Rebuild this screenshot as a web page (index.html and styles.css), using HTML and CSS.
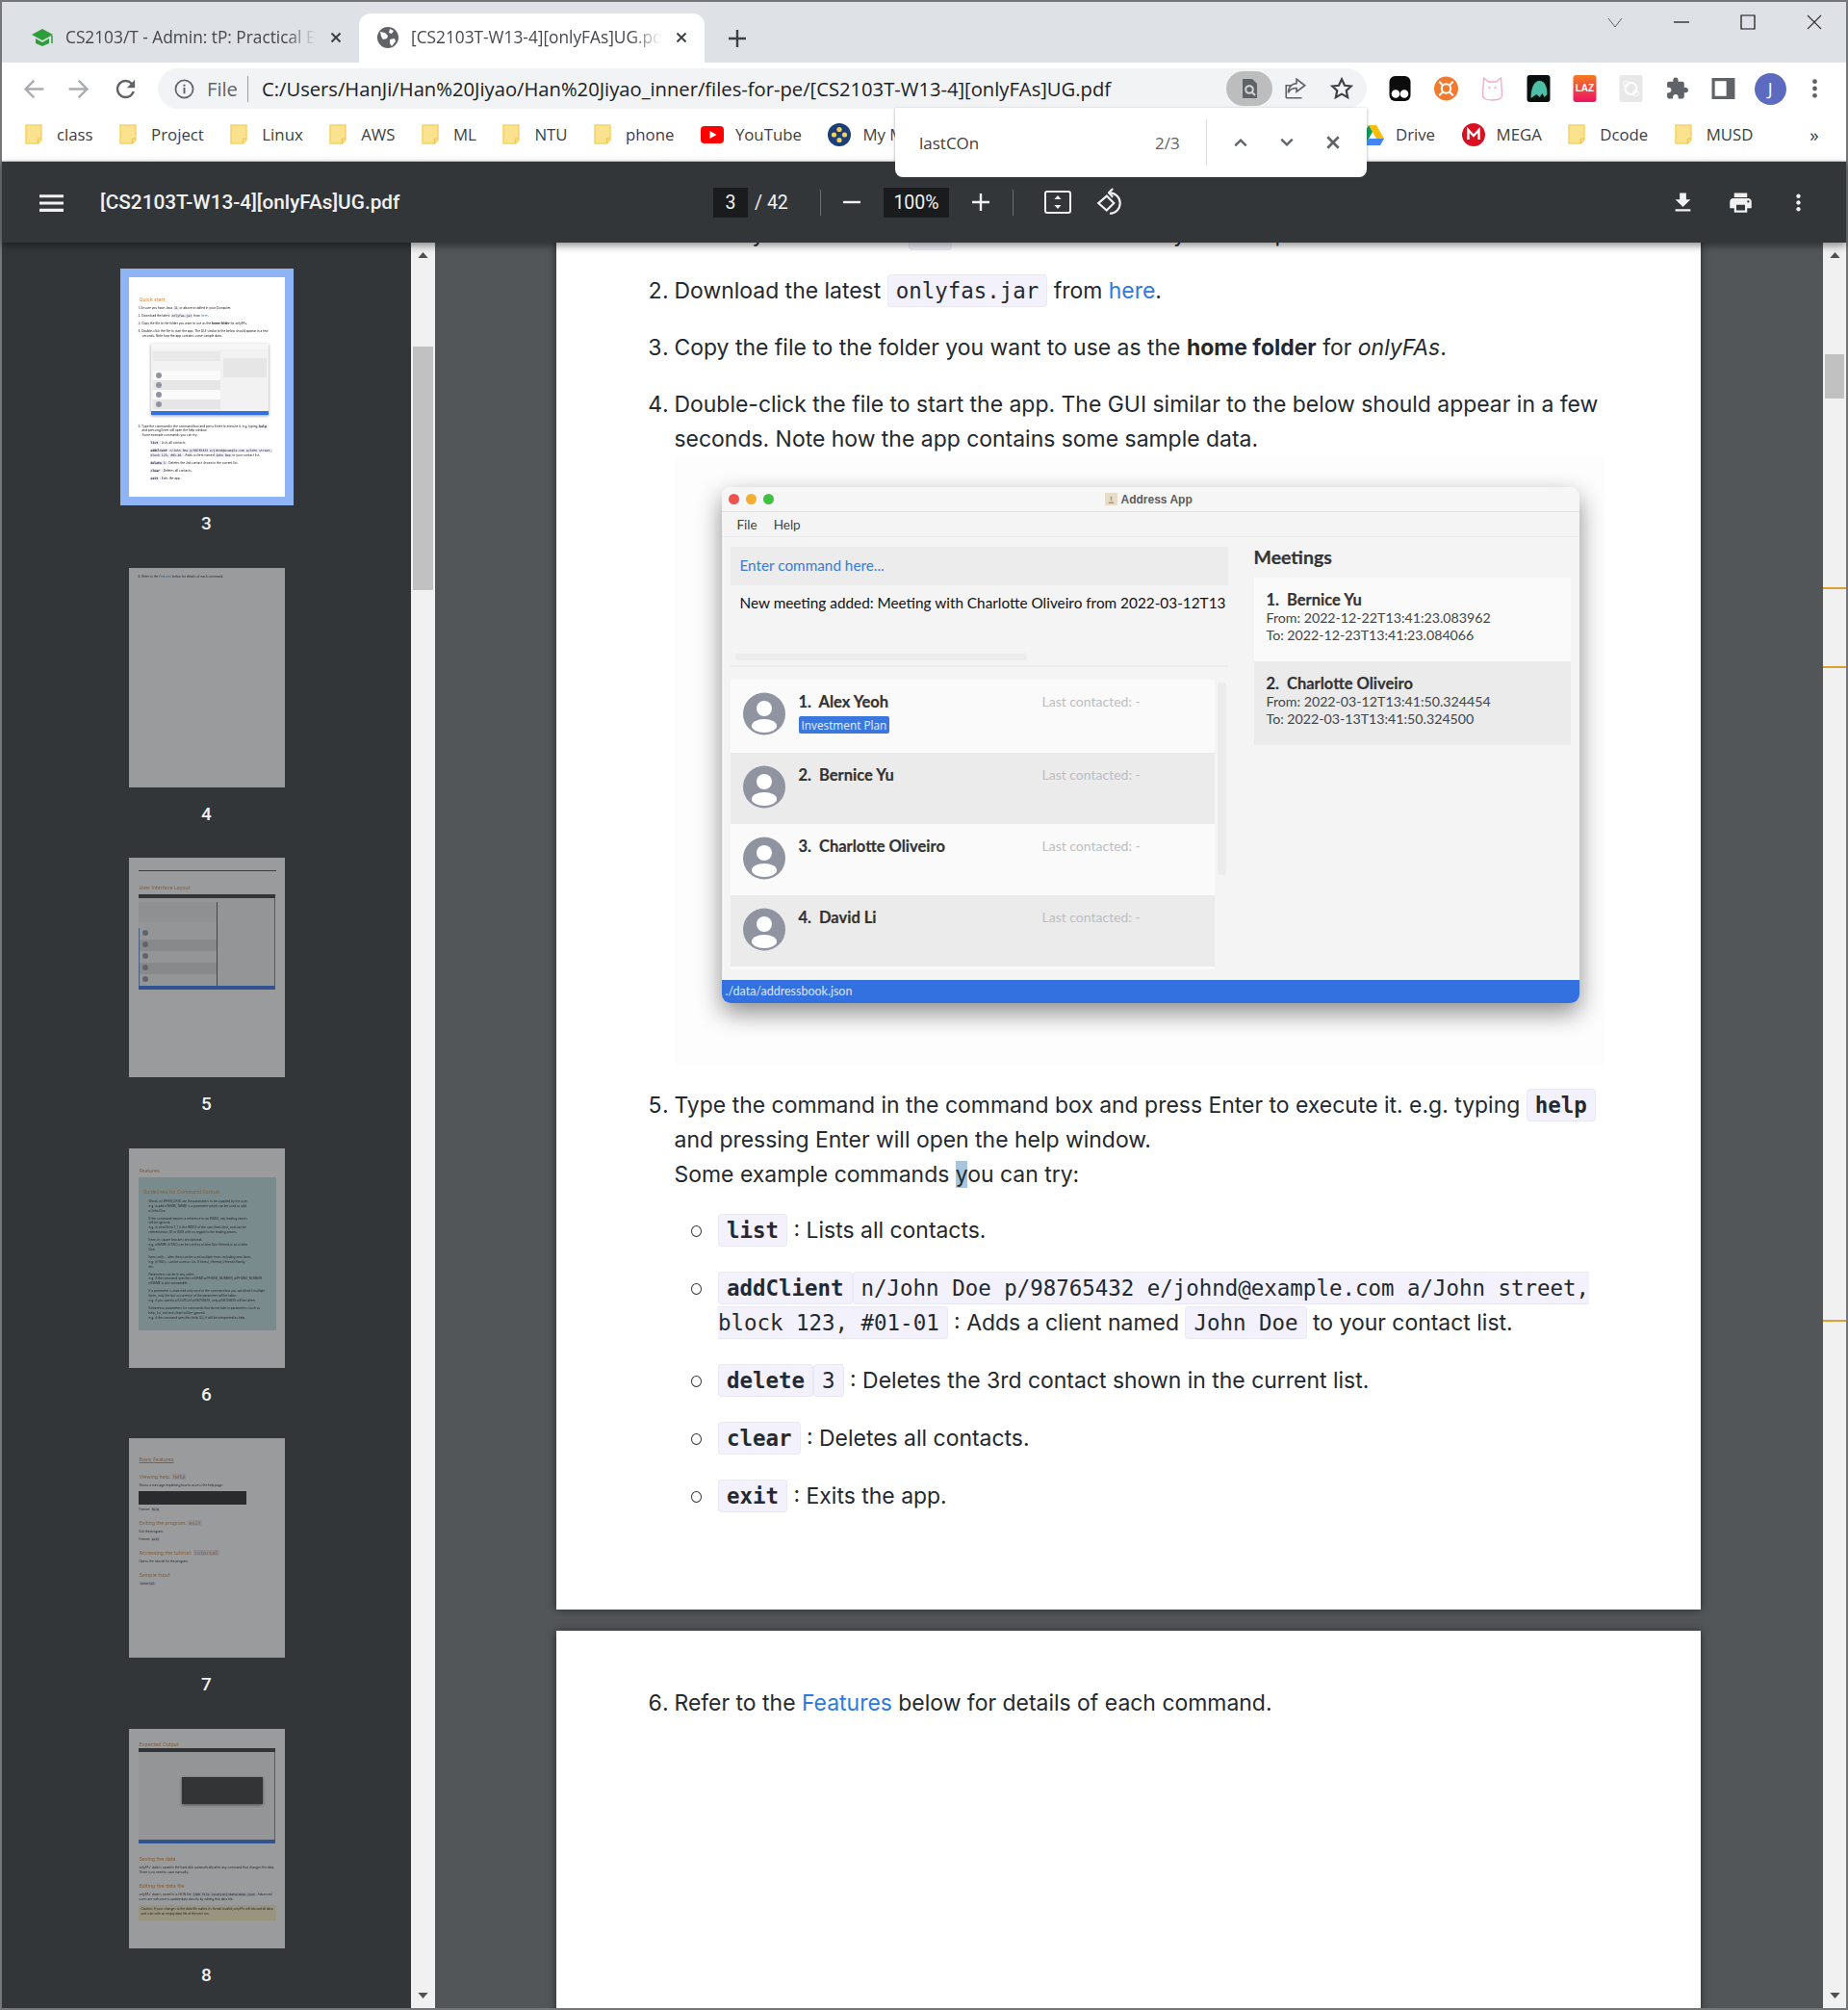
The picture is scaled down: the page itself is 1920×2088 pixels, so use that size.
FILE: index.html
```html
<!DOCTYPE html>
<html lang="en">
<head>
    <meta charset="UTF-8">
    <title>[CS2103T-W13-4][onlyFAs]UG.pdf</title>
    <link rel="stylesheet" href="styles.css">
</head>
<body>
<svg class="defs" width="0" height="0">
    <symbol id="folder" viewBox="0 0 18 21"><path d="M1 1h16v15.500l-3.500 3.500H1z" fill="#fbe28f" stroke="#f6d466" stroke-width="1.500"/><path d="M17 15h-3.500v5" fill="none" stroke="#f0c64f" stroke-width="1.200"/></symbol>
    <symbol id="avatar" viewBox="0 0 44 45"><circle cx="22" cy="22.500" r="22" fill="#8f94a0"/><circle cx="22" cy="17" r="8" fill="#fff"/><ellipse cx="22" cy="35" rx="13" ry="7" fill="#fff"/></symbol>
</svg>

<div class="browser">
    <!-- tabs -->
    <div class="tabs">
        <div class="tab">
            <svg class="favicon" viewBox="0 0 24 24"><path d="M12 3 1 9l11 6 11-6z" fill="#2e9e3a"/><path d="M5 13v5l7 3 7-3v-5l-7 4z" fill="#2e9e3a"/><path d="M22 10v8" stroke="#2e9e3a" stroke-width="1.500"/></svg>
            <span class="tab-title">CS2103/T - Admin: tP: Practical Exam</span>
            <svg class="tab-x" viewBox="0 0 12 12"><path d="M1.500 1.500l9 9m0-9l-9 9" stroke="#3c4043" stroke-width="2"/></svg>
        </div>
        <div class="tab tab-active">
            <svg class="favicon" viewBox="0 0 24 24"><circle cx="12" cy="12" r="11" fill="#5f6368"/><path d="M4 6l5 1 3 3-1 3-4 1-2-3zM14 3l4 2-2 3-3-1zM14 14l5-1 1 3-4 5-2-3z" fill="#fff"/></svg>
            <span class="tab-title">[CS2103T-W13-4][onlyFAs]UG.pdf</span>
            <svg class="tab-x" viewBox="0 0 12 12"><path d="M1.500 1.500l9 9m0-9l-9 9" stroke="#3c4043" stroke-width="2"/></svg>
        </div>
        <svg class="tab-plus" viewBox="0 0 20 20"><path d="M10 1v18M1 10h18" stroke="#3c4043" stroke-width="2.400"/></svg>
        <div class="win-btns">
            <svg viewBox="0 0 16 16" class="win-ic"><path d="M1 4l7 9 7-9" fill="none" stroke="#5f6368"/></svg>
            <svg viewBox="0 0 16 16" class="win-ic"><path d="M0 8h16" stroke="#111" stroke-width="1.200"/></svg>
            <svg viewBox="0 0 16 16" class="win-ic"><path d="M1 1h14v14H1z" fill="none" stroke="#111" stroke-width="1.200"/></svg>
            <svg viewBox="0 0 16 16" class="win-ic"><path d="M1 1l14 14M15 1L1 15" stroke="#333" stroke-width="1.100"/></svg>
        </div>
    </div>

    <!-- address bar -->
    <div class="toolbar">
        <div class="nav-btn"><svg viewBox="0 0 24 24" fill="#a9adb2"><path d="M21 11H7.800l5.600-5.600L12 4l-8 8 8 8 1.400-1.400L7.800 13H21z"/></svg></div>
        <div class="nav-btn"><svg viewBox="0 0 24 24" fill="#a9adb2"><path d="M3 11h13.200l-5.600-5.600L12 4l8 8-8 8-1.400-1.400 5.600-5.600H3z"/></svg></div>
        <div class="nav-btn"><svg viewBox="0 0 24 24" fill="#5f6368"><path d="M17.650 6.350A7.958 7.958 0 0 0 12 4c-4.420 0-7.990 3.580-7.990 8s3.570 8 7.990 8c3.730 0 6.840-2.550 7.730-6h-2.080A5.990 5.990 0 0 1 12 18c-3.310 0-6-2.690-6-6s2.690-6 6-6c1.660 0 3.140.690 4.220 1.780L13 11h7V4l-2.350 2.350z"/></svg></div>
        <div class="omnibox">
            <svg class="info" viewBox="0 0 22 22"><circle cx="11" cy="11" r="9.500" fill="none" stroke="#5f6368" stroke-width="1.800"/><path d="M11 9.500V16M11 6v2" stroke="#5f6368" stroke-width="2"/></svg>
            <span class="scheme">File</span>
            <span class="url">C:/Users/HanJi/Han%20Jiyao/Han%20Jiyao_inner/files-for-pe/[CS2103T-W13-4][onlyFAs]UG.pdf</span>
            <div class="lens"><svg viewBox="0 0 24 24"><path d="M5 2h10l5 5v15H5z" fill="#5f6368"/><circle cx="12" cy="13" r="3.800" fill="none" stroke="#d5d6d7" stroke-width="2"/><path d="M15 16l3 3" stroke="#d5d6d7" stroke-width="2"/></svg></div>
            <div class="omni-ic"><svg viewBox="0 0 24 24" fill="none" stroke="#5f6368" stroke-width="1.500"><path d="M3 21h15M3 21V9h6M13 3l8 6-8 6v-3.500c-4 0-6.500 1-8 4.500 0-5 3-8.500 8-9z"/></svg></div>
            <div class="omni-ic"><svg viewBox="0 0 24 24" fill="none" stroke="#3c4043" stroke-width="2"><path d="M12 3l2.800 6 6.200.700-4.600 4.300 1.300 6.500L12 17.200 6.300 20.500 7.600 14 3 9.700 9.200 9z"/></svg></div>
        </div>
        <div class="exts">
            <div class="ext"><svg viewBox="0 0 24 28"><rect x="1" y="1" width="22" height="26" rx="6" fill="#0c0c0c"/><circle cx="7.500" cy="19.500" r="4.300" fill="#fff"/><circle cx="16.500" cy="19.500" r="4.300" fill="#fff"/></svg></div>
            <div class="ext"><svg viewBox="0 0 24 24"><circle cx="12" cy="12" r="12" fill="#ee7b30"/><circle cx="12" cy="12" r="4.500" fill="none" stroke="#fff" stroke-width="2"/><path d="M5 5l4 4m6 6l4 4M19 5l-4 4m-6 6l-4 4" stroke="#fff" stroke-width="2"/></svg></div>
            <div class="ext"><svg viewBox="0 0 24 28" fill="none" stroke="#f5a9c0" stroke-width="1.300"><path d="M3 3l5 4h8l5-4 1 18c0 4-5 5-10 5s-10-1-10-5z"/><path d="M8 12l2 2m6-2l-2 2" /></svg></div>
            <div class="ext"><svg viewBox="0 0 24 28"><rect width="24" height="28" rx="3" fill="#08100e"/><path d="M4 24c0-10 3-18 9-18s8 7 8 14l-3 3-2-4-3 4-3-3z" fill="#4cbfa6"/></svg></div>
            <div class="ext"><svg viewBox="0 0 24 28"><defs><linearGradient id="laz" x1="0" y1="0" x2="0" y2="1"><stop offset="0" stop-color="#f57c1f"/><stop offset="1" stop-color="#ee1265"/></linearGradient></defs><rect width="24" height="28" rx="3" fill="url(#laz)"/><text x="12" y="17" class="laz-text">LAZ</text></svg></div>
            <div class="ext"><svg viewBox="0 0 24 28"><rect width="24" height="28" rx="2" fill="#e8e8e8"/><circle cx="12" cy="14" r="6" fill="none" stroke="#fff" stroke-width="2"/><circle cx="7" cy="9" r="3" fill="none" stroke="#fff"/><circle cx="17" cy="19" r="3" fill="none" stroke="#fff"/></svg></div>
            <div class="ext"><svg viewBox="0 0 24 24" fill="#5f6368"><path d="M20.500 11H19V7c0-1.100-.9-2-2-2h-4V3.500a2.500 2.500 0 0 0-5 0V5H4c-1.100 0-1.990.9-1.990 2v3.800H3.500c1.490 0 2.700 1.210 2.700 2.700s-1.210 2.700-2.700 2.700H2V20c0 1.100.9 2 2 2h3.800v-1.500c0-1.490 1.210-2.700 2.700-2.700 1.490 0 2.700 1.210 2.700 2.700V22H17c1.100 0 2-.9 2-2v-4h1.500a2.500 2.500 0 0 0 0-5z"/></svg></div>
            <div class="ext"><svg viewBox="0 0 24 24"><path d="M2 3h20v18H2z" fill="none" stroke="#5f6368" stroke-width="3"/><path d="M15 3h7v18h-7z" fill="#5f6368"/></svg></div>
            <div class="avatar-btn">J</div>
            <div class="ext"><svg viewBox="0 0 24 24" fill="#5f6368"><circle cx="12" cy="5" r="2.300"/><circle cx="12" cy="12" r="2.300"/><circle cx="12" cy="19" r="2.300"/></svg></div>
        </div>
    </div>

    <!-- bookmarks -->
    <div class="bookmarks">
        <div class="bm-group">
            <div class="bm"><svg class="bm-ic"><use href="#folder"/></svg>class</div>
            <div class="bm"><svg class="bm-ic"><use href="#folder"/></svg>Project</div>
            <div class="bm"><svg class="bm-ic"><use href="#folder"/></svg>Linux</div>
            <div class="bm"><svg class="bm-ic"><use href="#folder"/></svg>AWS</div>
            <div class="bm"><svg class="bm-ic"><use href="#folder"/></svg>ML</div>
            <div class="bm"><svg class="bm-ic"><use href="#folder"/></svg>NTU</div>
            <div class="bm"><svg class="bm-ic"><use href="#folder"/></svg>phone</div>
            <div class="bm"><svg class="bm-ic-wide" viewBox="0 0 24 18"><rect width="24" height="18" rx="4" fill="#f00"/><path d="M9.500 5v8l7-4z" fill="#fff"/></svg>YouTube</div>
            <div class="bm"><svg class="bm-ic-wide" viewBox="0 0 24 24"><circle cx="12" cy="12" r="12" fill="#1d3f78"/><circle cx="12" cy="6.500" r="2.600" fill="#f3cf5b"/><circle cx="6.500" cy="12" r="2.600" fill="#f3cf5b"/><circle cx="17.500" cy="12" r="2.600" fill="#f3cf5b"/><circle cx="12" cy="17.500" r="2.600" fill="#f3cf5b"/></svg>My M</div>
        </div>
        <div class="bm-group">
            <div class="bm"><svg class="bm-ic-wide" viewBox="0 0 24 22"><path d="M8 1h8l8 14h-8z" fill="#fbbc04"/><path d="M8 1L0 15l4 7 8-14z" fill="#0f9d58"/><path d="M4 22h16l4-7H8z" fill="#4285f4"/></svg>Drive</div>
            <div class="bm"><svg class="bm-ic-wide" viewBox="0 0 24 24"><circle cx="12" cy="12" r="12" fill="#d9101f"/><path d="M6.500 17V7l5.500 6 5.500-6v10" fill="none" stroke="#fff" stroke-width="2.400"/></svg>MEGA</div>
            <div class="bm"><svg class="bm-ic"><use href="#folder"/></svg>Dcode</div>
            <div class="bm"><svg class="bm-ic"><use href="#folder"/></svg>MUSD</div>
            <div class="bm-more">»</div>
        </div>
    </div>

    <!-- pdf viewer toolbar -->
    <div class="pdfbar">
        <svg class="pdf-ic menu-ic" viewBox="0 0 24 24"><path d="M0 4h24v3H0zM0 11h24v3H0zM0 18h24v3H0z" fill="#f1f1f1"/></svg>
        <div class="pdf-title">[CS2103T-W13-4][onlyFAs]UG.pdf</div>
        <div class="pdf-center">
            <span class="num-box page-box">3</span>
            <span class="page-total">/ 42</span>
            <span class="pdf-sep"></span>
            <svg class="pdf-ic zoom-ic" viewBox="0 0 18 18"><path d="M0 9h18" stroke="#f1f1f1" stroke-width="2.400"/></svg>
            <span class="num-box zoom-box">100%</span>
            <svg class="pdf-ic zoom-ic" viewBox="0 0 18 18"><path d="M0 9h18M9 0v18" stroke="#f1f1f1" stroke-width="2.400"/></svg>
            <span class="pdf-sep"></span>
            <svg class="pdf-ic fit-ic" viewBox="0 0 28 28" fill="none" stroke="#f1f1f1" stroke-width="2"><rect x="1" y="3" width="26" height="22" rx="2"/><path d="M14 7l-3.500 4h7zM14 21l-3.500-4h7z" fill="#f1f1f1" stroke="none"/></svg>
            <svg class="pdf-ic rot-ic" viewBox="0 0 28 28" fill="none" stroke="#f1f1f1" stroke-width="2"><path d="M11 8L3 15l8 7 7-7z"/><path d="M14 5a10 10 0 1 1 0 20"/><path d="M17 1l-4 4 4 4" stroke-linejoin="round"/></svg>
        </div>
        <div class="pdf-right">
            <svg class="pdf-ic" viewBox="0 0 24 24" fill="#f1f1f1"><path d="M19 9h-4V3H9v6H5l7 7 7-7zM5 18v2h14v-2H5z"/></svg>
            <svg class="pdf-ic" viewBox="0 0 24 24" fill="#f1f1f1"><path d="M19 8H5c-1.660 0-3 1.340-3 3v6h4v4h12v-4h4v-6c0-1.660-1.340-3-3-3zm-3 11H8v-5h8v5zm3-7c-.55 0-1-.45-1-1s.45-1 1-1 1 .45 1 1-.45 1-1 1zm-1-9H6v4h12V3z"/></svg>
            <svg class="pdf-ic" viewBox="0 0 24 24" fill="#f1f1f1"><path d="M12 8c1.100 0 2-.9 2-2s-.9-2-2-2-2 .9-2 2 .9 2 2 2zm0 2c-1.100 0-2 .9-2 2s.9 2 2 2 2-.9 2-2-.9-2-2-2zm0 6c-1.100 0-2 .9-2 2s.9 2 2 2 2-.9 2-2-.9-2-2-2z"/></svg>
        </div>
    </div>

    <!-- viewer -->
    <div class="viewer">
        <aside class="sidebar">
            <div class="thumb thumb-on">
                <div class="mini">
                    <p class="m-h m-h3">Quick start</p>
                    <p class="m-t m-i">1. Ensure you have Java <span class="m-c">11</span> or above installed in your Computer.</p>
                    <p class="m-t m-i">2. Download the latest <span class="m-c">onlyfas.jar</span> from <span class="m-link">here</span>.</p>
                    <p class="m-t m-i">3. Copy the file to the folder you want to use as the <b>home folder</b> for onlyFAs.</p>
                    <p class="m-t m-i m-close">4. Double-click the file to start the app. The GUI similar to the below should appear in a few</p>
                    <p class="m-t m-i m-in">seconds. Note how the app contains some sample data.</p>
                    <div class="m-win">
                        <div class="m-win-top"></div>
                        <div class="m-win-body">
                            <div class="m-win-left"><i class="m-cmd"></i><i class="m-row m-row-w"></i><i class="m-row"></i><i class="m-row m-row-w"></i><i class="m-row"></i></div>
                            <div class="m-win-right"><i class="m-card m-row-w"></i><i class="m-card"></i></div>
                        </div>
                        <div class="m-win-status"></div>
                    </div>
                    <p class="m-t m-i m-close">5. Type the command in the command box and press Enter to execute it. e.g. typing <span class="m-c"><b>help</b></span></p>
                    <p class="m-t m-i m-close m-in">and pressing Enter will open the help window.</p>
                    <p class="m-t m-i m-in">Some example commands you can try:</p>
                    <p class="m-t m-b"><span class="m-c"><b>list</b></span> : Lists all contacts.</p>
                    <p class="m-t m-b m-close"><span class="m-c"><b>addClient</b></span> <span class="m-c">n/John Doe p/98765432 e/johnd@example.com a/John street,</span></p>
                    <p class="m-t m-b"><span class="m-c">block 123, #01-01</span> : Adds a client named <span class="m-c">John Doe</span> to your contact list.</p>
                    <p class="m-t m-b"><span class="m-c"><b>delete</b> 3</span> : Deletes the 3rd contact shown in the current list.</p>
                    <p class="m-t m-b"><span class="m-c"><b>clear</b></span> : Deletes all contacts.</p>
                    <p class="m-t m-b"><span class="m-c"><b>exit</b></span> : Exits the app.</p>
                </div>
            </div>
            <div class="thumb-num">3</div>

            <div class="thumb">
                <div class="mini"><p class="m-t m-i m-first">6. Refer to the <span class="m-link">Features</span> below for details of each command.</p></div>
            </div>
            <div class="thumb-num">4</div>

            <div class="thumb">
                <div class="mini">
                    <hr class="m-hr">
                    <p class="m-h m-h5">User Interface Layout</p>
                    <div class="m-shot">
                        <div class="m-shot-top"></div>
                        <div class="m-shot-body">
                            <div class="m-shot-left"><i class="m-cmd m-cmd-5"></i><i class="m-row m-row-5"></i><i class="m-row m-row-5 m-row-g"></i><i class="m-row m-row-5"></i><i class="m-row m-row-5 m-row-g"></i><i class="m-row m-row-5"></i></div>
                        </div>
                        <div class="m-win-status"></div>
                    </div>
                </div>
            </div>
            <div class="thumb-num">5</div>

            <div class="thumb">
                <div class="mini">
                    <p class="m-h m-h6">Features</p>
                    <div class="m-note">
                        <p class="m-h m-note-h">Guidelines for Command Format:</p>
                        <p class="m-t m-n m-close">Words in UPPER_CASE are the parameters to be supplied by the user.</p>
                        <p class="m-t m-n m-close">e.g. in add n/NAME, NAME is a parameter which can be used as add</p>
                        <p class="m-t m-n">n/John Doe.</p>
                        <p class="m-t m-n m-close">If the command requires a reference to an INDEX, any leading zeroes</p>
                        <p class="m-t m-n m-close">will be ignored.</p>
                        <p class="m-t m-n m-close">e.g. in viewClient 1, 1 is the INDEX of the specified client, and can be</p>
                        <p class="m-t m-n">referenced as 01 or 0001 with no regard to the leading zeroes.</p>
                        <p class="m-t m-n m-close">Items in square brackets are optional.</p>
                        <p class="m-t m-n m-close">e.g. n/NAME [t/TAG] can be used as n/John Doe t/friend or as n/John</p>
                        <p class="m-t m-n">Doe.</p>
                        <p class="m-t m-n m-close">Items with ... after them can be used multiple times including zero times.</p>
                        <p class="m-t m-n m-close">e.g. [t/TAG]... can be used as (i.e. 0 times), t/friend, t/friend t/family</p>
                        <p class="m-t m-n">etc.</p>
                        <p class="m-t m-n m-close">Parameters can be in any order.</p>
                        <p class="m-t m-n m-close">e.g. if the command specifies n/NAME p/PHONE_NUMBER, p/PHONE_NUMBER</p>
                        <p class="m-t m-n">n/NAME is also acceptable.</p>
                        <p class="m-t m-n m-close">If a parameter is expected only once in the command but you specified it multiple</p>
                        <p class="m-t m-n m-close">times, only the last occurrence of the parameter will be taken.</p>
                        <p class="m-t m-n">e.g. if you specify p/12341234 p/56785678, only p/56785678 will be taken.</p>
                        <p class="m-t m-n m-close">Extraneous parameters for commands that do not take in parameters (such as</p>
                        <p class="m-t m-n m-close">help, list, exit and clear) will be ignored.</p>
                        <p class="m-t m-n">e.g. if the command specifies help 123, it will be interpreted as help.</p>
                    </div>
                </div>
            </div>
            <div class="thumb-num">6</div>

            <div class="thumb">
                <div class="mini">
                    <p class="m-h m-h7">Basic Features</p>
                    <p class="m-h m-sub">Viewing help: <span class="m-c">help</span></p>
                    <p class="m-t m-l">Shows a message explaining how to access the help page.</p>
                    <div class="m-dark"></div>
                    <p class="m-t m-l">Format: <span class="m-c">help</span></p>
                    <p class="m-h m-sub">Exiting the program: <span class="m-c">exit</span></p>
                    <p class="m-t m-l">Exit the program.</p>
                    <p class="m-t m-l">Format: <span class="m-c">exit</span></p>
                    <p class="m-h m-sub">Accessing the tutorial: <span class="m-c">tutorial</span></p>
                    <p class="m-t m-l">Opens the tutorial for the program.</p>
                    <p class="m-h m-sub">Sample Input</p>
                    <p class="m-t m-l"><span class="m-c">tutorial</span></p>
                </div>
            </div>
            <div class="thumb-num">7</div>

            <div class="thumb">
                <div class="mini">
                    <p class="m-h m-h8">Expected Output</p>
                    <div class="m-shot m-shot-8">
                        <div class="m-shot-top"></div>
                        <div class="m-shot-body m-shot-body-8"><div class="m-dialog"></div></div>
                        <div class="m-win-status"></div>
                    </div>
                    <p class="m-h m-sub">Saving the data</p>
                    <p class="m-t m-l m-close">onlyFAs' data is saved in the hard disk automatically after any command that changes the data.</p>
                    <p class="m-t m-l">There is no need to save manually.</p>
                    <p class="m-h m-sub">Editing the data file</p>
                    <p class="m-t m-l m-close">onlyFAs' data is saved in a JSON file <span class="m-c">[JAR file location]/data/data.json</span>. Advanced</p>
                    <p class="m-t m-l">users are welcome to update data directly by editing that data file.</p>
                    <div class="m-warn"><p class="m-t">Caution: If your changes to the data file makes its format invalid, onlyFAs will discard all data and start with an empty data file at the next run.</p></div>
                </div>
            </div>
            <div class="thumb-num">8</div>
        </aside>

        <div class="scrollbar scrollbar-side">
            <svg class="sb-arrow" viewBox="0 0 12 7"><path d="M6 0l6 7H0z"/></svg>
            <div class="sb-track"><div class="sb-thumb sb-thumb-side"></div></div>
            <svg class="sb-arrow" viewBox="0 0 12 7"><path d="M6 7l6-7H0z"/></svg>
        </div>

        <main class="main">
            <div class="pages">
                <section class="page page-one">
                    <ol class="steps">
                        <li>Ensure you have Java <code class="chip">11</code> or above installed in your Computer.</li>
                        <li>Download the latest <code class="chip">onlyfas.jar</code> from <a class="link">here</a>.</li>
                        <li>Copy the file to the folder you want to use as the <strong>home folder</strong> for <em>onlyFAs</em>.</li>
                        <li>Double-click the file to start the app. The GUI similar to the below should appear in a few seconds. Note how the app contains some sample data.
                            <div class="shot">
                                <div class="app">
                                    <div class="app-title">
                                        <span class="dot dot-r"></span><span class="dot dot-y"></span><span class="dot dot-g"></span>
                                        <span class="app-name"><svg class="app-ic" viewBox="0 0 14 14"><rect width="14" height="14" fill="#e6dcc8"/><path d="M4 11h6M7 4v5" stroke="#a89878" stroke-width="1.500"/></svg>Address App</span>
                                    </div>
                                    <div class="app-menu"><span>File</span><span>Help</span></div>
                                    <div class="app-body">
                                        <div class="app-left">
                                            <div class="cmd">Enter command here...</div>
                                            <div class="result">New meeting added: Meeting with Charlotte Oliveiro from 2022-03-12T13</div>
                                            <div class="hscroll"></div>
                                            <div class="app-rule"></div>
                                            <div class="people">
                                                <div class="person-list">
                                                    <div class="person person-first">
                                                        <svg class="person-ic"><use href="#avatar"/></svg>
                                                        <div class="person-main"><div class="person-name">1.&nbsp; Alex Yeoh</div><span class="tag">Investment Plan</span></div>
                                                        <div class="last">Last contacted: -</div>
                                                    </div>
                                                    <div class="person person-alt">
                                                        <svg class="person-ic"><use href="#avatar"/></svg>
                                                        <div class="person-main"><div class="person-name">2.&nbsp; Bernice Yu</div></div>
                                                        <div class="last">Last contacted: -</div>
                                                    </div>
                                                    <div class="person">
                                                        <svg class="person-ic"><use href="#avatar"/></svg>
                                                        <div class="person-main"><div class="person-name">3.&nbsp; Charlotte Oliveiro</div></div>
                                                        <div class="last">Last contacted: -</div>
                                                    </div>
                                                    <div class="person person-alt">
                                                        <svg class="person-ic"><use href="#avatar"/></svg>
                                                        <div class="person-main"><div class="person-name">4.&nbsp; David Li</div></div>
                                                        <div class="last">Last contacted: -</div>
                                                    </div>
                                                </div>
                                                <div class="vscroll"></div>
                                            </div>
                                        </div>
                                        <div class="app-right">
                                            <div class="meet-h">Meetings</div>
                                            <div class="meet">
                                                <div class="meet-name">1.&nbsp; Bernice Yu</div>
                                                <div>From: 2022-12-22T13:41:23.083962</div>
                                                <div>To: 2022-12-23T13:41:23.084066</div>
                                            </div>
                                            <div class="meet meet-alt">
                                                <div class="meet-name">2.&nbsp; Charlotte Oliveiro</div>
                                                <div>From: 2022-03-12T13:41:50.324454</div>
                                                <div>To: 2022-03-13T13:41:50.324500</div>
                                            </div>
                                        </div>
                                    </div>
                                    <div class="app-status">./data/addressbook.json</div>
                                </div>
                            </div>
                        </li>
                        <li>Type the command in the command box and press Enter to execute it. e.g. typing <code class="chip"><b>help</b></code> and pressing Enter will open the help window.<br>
                            Some example commands <span class="hit">y</span>ou can try:
                            <ul class="cmds">
                                <li><code class="chip"><b>list</b></code> : Lists all contacts.</li>
                                <li><code class="chip"><b>addClient</b></code><code class="chip chip-open">n/John Doe p/98765432 e/johnd@example.com a/John street,</code><br><code class="chip chip-rest">block 123, #01-01</code> : Adds a client named <code class="chip">John Doe</code> to your contact list.</li>
                                <li><code class="chip"><b>delete</b></code><code class="chip">3</code> : Deletes the 3rd contact shown in the current list.</li>
                                <li><code class="chip"><b>clear</b></code> : Deletes all contacts.</li>
                                <li><code class="chip"><b>exit</b></code> : Exits the app.</li>
                            </ul>
                        </li>
                    </ol>
                </section>
                <section class="page page-two">
                    <ol class="steps" start="6">
                        <li>Refer to the <a class="link">Features</a> below for details of each command.</li>
                    </ol>
                </section>
            </div>
        </main>

        <div class="scrollbar scrollbar-main">
            <svg class="sb-arrow" viewBox="0 0 12 7"><path d="M6 0l6 7H0z"/></svg>
            <div class="sb-track"><div class="sb-thumb sb-thumb-main"></div></div>
            <svg class="sb-arrow" viewBox="0 0 12 7"><path d="M6 7l6-7H0z"/></svg>
            <i class="tick tick-a"></i><i class="tick tick-b"></i><i class="tick tick-c"></i>
        </div>
    </div>

    <!-- find in page -->
    <div class="findbar">
        <span class="find-text">lastCOn</span>
        <span class="find-count">2/3</span>
        <span class="find-sep"></span>
        <svg class="find-ic" viewBox="0 0 14 14"><path d="M2 10l5-5 5 5" fill="none" stroke="#5f6368" stroke-width="2"/></svg>
        <svg class="find-ic" viewBox="0 0 14 14"><path d="M2 4l5 5 5-5" fill="none" stroke="#5f6368" stroke-width="2"/></svg>
        <svg class="find-ic find-close" viewBox="0 0 14 14"><path d="M2 2l10 10m0-10L2 12" stroke="#5f6368" stroke-width="2.300"/></svg>
    </div>
</div>
</body>
</html>
```

FILE: styles.css
```css
* {
    box-sizing: border-box;
}
html, body {
    margin: 0;
    padding: 0;
    height: 2088px;
    overflow: hidden;
}
body {
    background-color: #75767a;
    font-family: "Open Sans", "Noto Sans", sans-serif;
    color: #202124;
}
.defs {
    position: absolute;
}
.browser {
    position: relative;
    height: 2088px;
    padding: 2px 2px 2px 2px;
    display: flex;
    flex-direction: column;
}

/* tabs */
.tabs {
    height: 63px;
    flex: none;
    background-color: #dee1e6;
    display: flex;
    align-items: flex-end;
    padding-left: 12px;
}
.tab {
    width: 359px;
    height: 51px;
    display: flex;
    align-items: center;
    padding: 0 18px 2px 18px;
    border-radius: 12px 12px 0 0;
    font-size: 17.300px;
    color: #45474a;
}
.tab-active {
    background-color: #fff;
    padding-left: 18px;
}
.favicon {
    width: 24px;
    height: 24px;
    flex: none;
    margin-right: 12px;
}
.tab-title {
    flex: 1;
    min-width: 0;
    overflow: hidden;
    white-space: nowrap;
    -webkit-mask-image: linear-gradient(90deg, #000 88%, transparent);
    mask-image: linear-gradient(90deg, #000 88%, transparent);
}
.tab-x {
    width: 12px;
    height: 12px;
    flex: none;
    margin-left: 15px;
}
.tab-plus {
    width: 20px;
    height: 20px;
    margin: 0 0 15px 24px;
}
.win-btns {
    margin-left: auto;
    align-self: flex-start;
    display: flex;
    gap: 53px;
    padding: 13px 25px 0 0;
}
.win-ic {
    width: 16px;
    height: 16px;
}

/* address bar */
.toolbar {
    height: 56px;
    flex: none;
    background-color: #fff;
    display: flex;
    align-items: flex-start;
    padding: 6px 0 0 8px;
}
.nav-btn {
    width: 48px;
    height: 42px;
    display: flex;
    align-items: center;
    justify-content: center;
}
.nav-btn svg {
    width: 29px;
    height: 29px;
}
.omnibox {
    width: 1256px;
    height: 42px;
    margin-left: 10px;
    background-color: #f1f3f4;
    border-radius: 21px;
    display: flex;
    align-items: center;
    padding-left: 17px;
    font-size: 20.200px;
    white-space: nowrap;
}
.info {
    width: 21px;
    height: 21px;
    margin-right: 13px;
}
.scheme {
    color: #5f6368;
    width: 43px;
    height: 27px;
    line-height: 27px;
    border-right: 1px solid #9aa0a6;
    margin-right: 14px;
}
.url {
    width: 988px;
    flex: none;
    color: #202124;
}
.lens {
    width: 48px;
    height: 36px;
    flex: none;
    border-radius: 18px;
    background-color: #bdbdbd;
    display: flex;
    align-items: center;
    justify-content: center;
    margin-left: 14px;
}
.lens svg {
    width: 24px;
    height: 24px;
}
.omni-ic {
    width: 48px;
    height: 36px;
    flex: none;
    display: flex;
    align-items: center;
    justify-content: center;
}
.omni-ic svg {
    width: 26px;
    height: 26px;
}
.exts {
    display: flex;
    align-items: center;
    height: 42px;
    margin-left: 10px;
}
.ext {
    width: 48.100px;
    height: 42px;
    display: flex;
    align-items: center;
    justify-content: center;
}
.ext svg {
    width: 25px;
    height: 28px;
}
.laz-text {
    font-family: "Liberation Sans", sans-serif;
    font-size: 10px;
    font-weight: 700;
    fill: #fff;
    text-anchor: middle;
}
.avatar-btn {
    width: 33px;
    height: 33px;
    margin: 0 6px 0 8px;
    border-radius: 50%;
    background-color: #5c6bc0;
    color: #fff;
    font-size: 18px;
    text-align: center;
    line-height: 33px;
}

/* bookmarks */
.bookmarks {
    height: 47px;
    flex: none;
    background-color: #fff;
    border-bottom: 1px solid #cfd1d4;
    display: flex;
    justify-content: space-between;
    padding: 0 13px 9px 24px;
    font-size: 16.800px;
    color: #3c4043;
}
.bm-group {
    display: flex;
    align-items: center;
    gap: 27.500px;
}
.bm {
    display: flex;
    align-items: center;
    white-space: nowrap;
}
.bm-ic {
    width: 18px;
    height: 21px;
    margin-right: 15px;
}
.bm-ic-wide {
    width: 24px;
    height: 24px;
    margin-right: 12px;
}
.bm-more {
    width: 40px;
    font-size: 19px;
    text-align: center;
    margin-left: 16px;
}

/* pdf toolbar */
.pdfbar {
    height: 84px;
    flex: none;
    background-color: #323639;
    color: #f1f1f1;
    display: flex;
    align-items: center;
    padding-left: 39px;
    position: relative;
    z-index: 2;
    box-shadow: 0 3px 8px rgba(0, 0, 0, .45);
}
.pdf-ic {
    width: 26px;
    height: 26px;
    flex: none;
}
.menu-ic {
    width: 25px;
    height: 25px;
}
.pdf-title {
    width: 637px;
    margin-left: 38px;
    font-family: Roboto, sans-serif;
    font-size: 20.800px;
    font-weight: 500;
    white-space: nowrap;
}
.pdf-center {
    display: flex;
    align-items: center;
    font-family: Roboto, sans-serif;
    font-size: 19.500px;
}
.num-box {
    height: 31px;
    line-height: 31px;
    background-color: #191b1c;
    text-align: center;
}
.page-box {
    width: 36px;
}
.page-total {
    width: 75px;
    padding-left: 7px;
}
.zoom-box {
    width: 68px;
}
.pdf-sep {
    width: 1px;
    height: 27px;
    background-color: #6a6d70;
}
.zoom-ic {
    width: 18px;
    height: 18px;
    margin: 0 24px;
}
.zoom-ic:first-of-type {
    margin-left: 23px;
}
.fit-ic {
    width: 28px;
    height: 28px;
    margin-left: 32px;
}
.rot-ic {
    width: 30px;
    height: 30px;
    margin-left: 25px;
}
.pdf-right {
    margin-left: auto;
    display: flex;
    gap: 33px;
    padding-right: 36px;
}
.pdf-right svg {
    width: 27px;
    height: 27px;
}

/* viewer */
.viewer {
    flex: 1;
    min-height: 0;
    display: flex;
}
.sidebar {
    width: 425px;
    flex: none;
    background-color: #323639;
    padding-top: 36px;
    overflow: hidden;
}
.thumb {
    width: 162px;
    height: 228px;
    margin: 0 auto;
    background-color: #fff;
    opacity: .5;
    overflow: hidden;
}
.thumb-on {
    opacity: 1;
    outline: 9px solid #8fb4f5;
}
.thumb-num {
    height: 73.600px;
    padding-top: 15px;
    text-align: center;
    color: #f1f1f1;
    font-family: Roboto, sans-serif;
    font-size: 19px;
    line-height: 26px;
    font-weight: 500;
}

/* tiny page renderings in the sidebar */
.mini {
    padding: 0 9px 0 10px;
    filter: blur(.3px);
    font-family: Inter, sans-serif;
}
.mini p {
    margin: 0;
}
.m-t {
    font-size: 3.150px;
    line-height: 4.900px;
    color: #111;
    white-space: nowrap;
}
.m-c {
    padding: 0 1px;
    background-color: #eceaf8;
    font-family: "DejaVu Sans Mono", monospace;
}
.m-link {
    color: #2a7ae2;
}
.m-h {
    color: #e0853a;
    font-size: 5.200px;
    line-height: 7px;
}
.m-h3 {
    padding: 20px 0 3px 1px;
}
.m-i {
    margin-left: 3px;
}
.mini .m-i, .mini .m-b, .mini .m-n, .mini .m-l {
    margin-bottom: 3px;
}
.mini .m-close {
    margin-bottom: 0;
}
.m-in {
    padding-left: 4px;
}
.m-first {
    padding-top: 7px;
}
.m-b {
    padding-left: 12px;
}
.m-win {
    width: 122px;
    height: 74px;
    margin: 5px 0 10px 13px;
    background-color: #f2f2f3;
    box-shadow: 0 1px 3px rgba(0, 0, 0, .4);
    display: flex;
    flex-direction: column;
}
.m-win-top {
    height: 7px;
    background-color: #f6f6f7;
}
.m-win-body {
    flex: 1;
    display: flex;
    padding: 2px;
    gap: 3px;
}
.m-win-left {
    width: 70px;
    display: flex;
    flex-direction: column;
}
.m-cmd {
    height: 10px;
    margin-bottom: 10px;
    background-color: #e9e9ea;
}
.m-row {
    height: 10px;
    background-color: #e6e6e7;
    padding: 2px 0 0 3px;
}
.m-row::before {
    content: "";
    display: block;
    width: 6px;
    height: 6px;
    border-radius: 50%;
    background-color: #8f94a0;
}
.m-row-w {
    background-color: #fafafa;
}
.m-win-right {
    flex: 1;
    padding-top: 7px;
    display: flex;
    flex-direction: column;
}
.m-card {
    height: 10px;
    background-color: #e6e6e7;
}
.m-win-status {
    height: 4px;
    flex: none;
    background-color: #3371e0;
}
.m-hr {
    margin: 13px 0 0;
    border: 0;
    border-top: 1px solid #444;
}
.m-h5 {
    padding: 14px 0 3px 1px;
}
.m-shot {
    width: 142px;
    height: 99px;
    display: flex;
    flex-direction: column;
    background-color: #f4f4f4;
}
.m-shot-top {
    height: 4px;
    flex: none;
    background-color: #333;
}
.m-shot-body {
    flex: 1;
    min-height: 0;
    padding-top: 4px;
    border-right: 1px solid #bb6f6f;
}
.m-shot-left {
    width: 82px;
    height: 100%;
    border-right: 1px solid #55508a;
    display: flex;
    flex-direction: column;
}
.m-cmd-5 {
    height: 21px;
    margin-bottom: 6px;
    flex: none;
}
.m-row-5 {
    height: 12px;
    flex: none;
    background-color: #f4f4f5;
    border-left: 1px solid #5b86c8;
}
.m-row-g {
    background-color: #dcdcdd;
}
.m-h6 {
    padding: 20px 0 3px 1px;
}
.m-note {
    height: 159px;
    padding: 12px 4px 0 5px;
    background-color: #c2dfe0;
    overflow: hidden;
}
.m-note-h {
    padding-bottom: 4px;
}
.m-n {
    padding-left: 6px;
}
.m-h7 {
    padding: 19px 0 6px 1px;
    text-decoration: underline;
}
.m-sub {
    padding: 5px 0 3px 1px;
}
.m-l {
    padding-left: 1px;
}
.m-dark {
    width: 112px;
    height: 14px;
    margin: 1px 0 3px;
    background-color: #222;
}
.m-h8 {
    padding: 13px 0 0 1px;
}
.m-shot-8 {
    margin-bottom: 8px;
}
.m-shot-body-8 {
    padding: 26px 12px 0 45px;
}
.m-dialog {
    height: 28px;
    background-color: #333;
    box-shadow: 0 1px 3px rgba(0, 0, 0, .6);
}
.m-warn {
    height: 16px;
    padding: 2px 3px;
    background-color: #fff1c4;
    overflow: hidden;
}
.m-warn p {
    white-space: normal;
}

/* scrollbars */
.scrollbar {
    width: 25px;
    flex: none;
    position: relative;
    background-color: #f1f1f1;
    display: flex;
    flex-direction: column;
    align-items: center;
}
.scrollbar-main {
    width: 24px;
}
.sb-arrow {
    width: 11px;
    height: 6px;
    flex: none;
    margin: 10px 0;
    fill: #505050;
}
.sb-track {
    flex: 1;
    width: 100%;
    padding: 0 2px;
}
.sb-thumb {
    background-color: #c1c1c1;
}
.sb-thumb-side {
    height: 253px;
    margin-top: 82px;
}
.sb-thumb-main {
    height: 46px;
    margin-top: 90px;
}
.tick {
    position: absolute;
    left: 0;
    right: 0;
    height: 2px;
    background-color: #e0a030;
}
.tick-a { top: 358px; }
.tick-b { top: 440px; }
.tick-c { top: 1119px; }

/* pdf pages */
.main {
    flex: 1;
    min-width: 0;
    overflow: hidden;
    background-color: #525659;
}
.pages {
    margin-top: -253px;
}
.page {
    width: 1189px;
    height: 1673px;
    margin: 0 0 22px 126px;
    background-color: #fff;
    box-shadow: 0 0 8px rgba(0, 0, 0, .5);
    font-family: Inter, "Noto Sans", sans-serif;
    font-size: 22.950px;
    line-height: 36px;
    color: #24292f;
    overflow: hidden;
}
.page-one {
    padding-top: 226px;
}
.page-two {
    padding-top: 57px;
}
.steps {
    margin: 0;
    padding: 0 100px 0 122.500px;
}
.steps > li {
    margin-bottom: 23px;
}
.link {
    color: #2a7ae2;
}
.chip {
    font-family: "DejaVu Sans Mono", monospace;
    font-size: 22.450px;
    padding: 3px 8px;
    background-color: #f2f1fc;
    border: 1px solid #e9e8f6;
    border-radius: 4px;
}
.chip b {
    font-weight: 700;
}
.chip-open {
    padding-right: 0;
    border-right: 0;
    border-radius: 4px 0 0 4px;
}
.chip-rest {
    padding-left: 0;
    border-left: 0;
    border-radius: 0 4px 4px 0;
}
.hit {
    background-color: #a7c6dd;
}
.cmds {
    margin: 22px 0 0;
    padding: 0 0 0 45.500px;
    list-style: none;
}
.cmds li {
    position: relative;
    margin-bottom: 24px;
}
.cmds li::before {
    content: "";
    position: absolute;
    left: -28px;
    top: 13px;
    width: 9px;
    height: 10px;
    border: 1.500px solid #333;
    border-radius: 50%;
}

/* app screenshot inside the guide */
.shot {
    padding: 32px 0 65px 49px;
    background-color: #fdfdfd;
}
.app {
    width: 891px;
    height: 536px;
    border-radius: 9px;
    background-color: #f4f4f5;
    box-shadow: 0 10px 26px rgba(0, 0, 0, .45);
    font-family: Lato, sans-serif;
    font-size: 15px;
    line-height: 18px;
    color: #222;
    display: flex;
    flex-direction: column;
    overflow: hidden;
}
.app-title {
    height: 26px;
    flex: none;
    display: flex;
    align-items: center;
    gap: 7px;
    padding-left: 7px;
    background-color: #f6f6f7;
    border-bottom: 1px solid #e2e2e3;
}
.dot {
    width: 11px;
    height: 11px;
    border-radius: 50%;
}
.dot-r { background-color: #f0524d; }
.dot-y { background-color: #f6ae31; }
.dot-g { background-color: #3fc23d; }
.app-name {
    display: flex;
    align-items: center;
    gap: 4px;
    margin-left: 337px;
    font-family: "Liberation Sans", sans-serif;
    font-size: 12px;
    font-weight: 700;
    color: #5c5c5c;
}
.app-ic {
    width: 13px;
    height: 13px;
}
.app-menu {
    height: 26px;
    flex: none;
    display: flex;
    align-items: center;
    gap: 17px;
    padding-left: 16px;
    border-bottom: 1px solid #ececed;
    font-size: 13.500px;
    color: #444;
}
.app-body {
    flex: 1;
    display: flex;
    min-height: 0;
    padding: 10px 9px 0;
}
.app-left {
    width: 517px;
    flex: none;
}
.cmd {
    height: 40px;
    line-height: 38px;
    padding-left: 10px;
    background-color: #ececed;
    font-size: 15.300px;
    color: #3a7bd5;
}
.result {
    padding: 9px 0 0 10px;
    font-size: 15.340px;
    line-height: 18px;
    white-space: nowrap;
    color: #111;
}
.hscroll {
    width: 303px;
    height: 7px;
    margin: 44px 0 0 5px;
    background-color: #ececed;
    border-radius: 3px;
}
.app-rule {
    height: 2px;
    margin-top: 5px;
    background-color: #ececed;
}
.people {
    display: flex;
    margin-top: 13px;
}
.person-list {
    width: 503px;
    flex: none;
    padding-bottom: 3px;
    background-color: #fafafa;
}
.person {
    height: 74px;
    display: flex;
    padding: 13px 0 0 13px;
    background-color: #fafafa;
}
.person-first {
    height: 76px;
}
.person-alt {
    background-color: #ebebec;
}
.person-ic {
    width: 44px;
    height: 45px;
    flex: none;
}
.person-main {
    width: 267px;
    padding: 0 0 0 14px;
}
.person-name {
    font-size: 16.500px;
    font-weight: 700;
    line-height: 20px;
    color: #333;
    -webkit-text-stroke: .2px #333;
}
.tag {
    display: inline-block;
    margin-top: 5px;
    padding: 0 3px;
    height: 18px;
    line-height: 18px;
    background-color: #3a78de;
    border-radius: 2px;
    color: #e8f0ff;
    font-family: "Open Sans", sans-serif;
    font-size: 11.800px;
}
.last {
    color: #bdbdc3;
    font-size: 14px;
    line-height: 20px;
}
.vscroll {
    width: 9px;
    height: 200px;
    margin: 3px 0 0 3px;
    background-color: #ececed;
    border-radius: 2px;
}
.app-right {
    flex: 1;
    padding: 0 0 0 27px;
}
.meet-h {
    height: 22px;
    font-size: 19.500px;
    font-weight: 700;
    line-height: 22px;
    color: #333;
    -webkit-text-stroke: .2px #333;
}
.meet {
    height: 87px;
    margin-top: 10px;
    padding: 13px 0 0 13px;
    background-color: #fafafa;
    font-size: 14.200px;
    line-height: 18px;
    color: #444;
}
.meet-alt {
    margin-top: 0;
    background-color: #ebebec;
}
.meet-name {
    font-size: 16.500px;
    font-weight: 700;
    line-height: 20px;
    color: #333;
    -webkit-text-stroke: .2px #333;
}
.app-status {
    height: 24px;
    flex: none;
    line-height: 24px;
    padding-left: 4px;
    background-color: #3371e0;
    color: #dbe6fa;
    font-size: 12.500px;
}

/* find bar sits over the toolbars */
.findbar {
    position: absolute;
    top: 112px;
    left: 930px;
    width: 490px;
    height: 72px;
    z-index: 3;
    background-color: #fff;
    border-radius: 0 0 8px 8px;
    box-shadow: 0 1px 3px rgba(60, 64, 67, .5);
    display: flex;
    align-items: center;
    font-size: 17px;
    color: #3c4043;
}
.find-text {
    width: 270px;
    flex: none;
    padding-left: 25px;
}
.find-count {
    width: 53px;
    flex: none;
    color: #5f6368;
}
.find-sep {
    width: 1px;
    height: 48px;
    flex: none;
    background-color: #dadce0;
    margin-right: 27px;
}
.find-ic {
    width: 16px;
    height: 16px;
    flex: none;
    margin-right: 32px;
}
.find-close {
    margin-right: 0;
}
```
